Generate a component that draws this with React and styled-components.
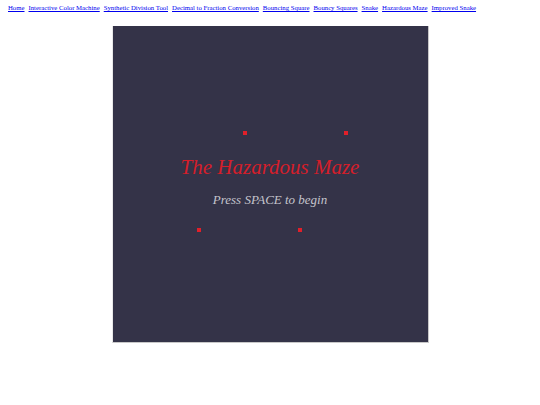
import * as React from 'react';
import styled, { createGlobalStyle } from 'styled-components';

const links = [
    'Home',
    'Interactive Color Machine',
    'Synthetic Division Tool',
    'Decimal to Fraction Conversion',
    'Bouncing Square',
    'Bouncy Squares',
    'Snake',
    'Hazardous Maze',
    'Improved Snake',
];

const hazards = [
    { x: 130, y: 105 },
    { x: 231, y: 105 },
    { x: 84, y: 202 },
    { x: 185, y: 202 },
];

export default function App() {
    return (
        <>
            <GlobalStyle/>
            <Nav>
                {links.map((label) => (
                    <NavLink key={label} href={'#'}>{label}</NavLink>
                ))}
            </Nav>
            <Stage>
                <Board>
                    {hazards.map((h, i) => (
                        <Hazard key={i} style={{ left: h.x, top: h.y }}/>
                    ))}
                    <Title>The Hazardous Maze</Title>
                    <Hint>Press SPACE to begin</Hint>
                </Board>
            </Stage>
        </>
    );
}

const GlobalStyle = createGlobalStyle`
    body {
        margin: 0;
        background: #ffffff;
        font-family: "Liberation Serif", "Times New Roman", serif;
    }
`;

const Nav = styled.nav`
    display: flex;
    gap: 4px;
    padding: 3px 8px 0;
    height: 23px;
    box-sizing: border-box;
`;

const NavLink = styled.a`
    font-size: 6.75px;
    color: #0000ee;
    text-decoration: underline;
    white-space: nowrap;
    line-height: 9px;
`;

const Stage = styled.div`
    display: flex;
    justify-content: center;
    padding-top: 3px;
`;

const Board = styled.div`
    position: relative;
    width: 317px;
    height: 317px;
    background: #343348;
    border-right: 1px solid #c8c8c8;
    border-bottom: 1px solid #c8c8c8;
    border-left: 1px solid #e8e8e8;
    display: flex;
    flex-direction: column;
    align-items: center;
    padding-top: 128px;
    box-sizing: border-box;
`;

const Hazard = styled.div`
    position: absolute;
    width: 4px;
    height: 4px;
    background: #e0202a;
`;

const Title = styled.div`
    font-style: italic;
    font-size: 21px;
    line-height: 26px;
    color: #d41e2a;
`;

const Hint = styled.div`
    margin-top: 12px;
    font-style: italic;
    font-size: 13px;
    line-height: 16px;
    color: #c4c4cc;
`;
